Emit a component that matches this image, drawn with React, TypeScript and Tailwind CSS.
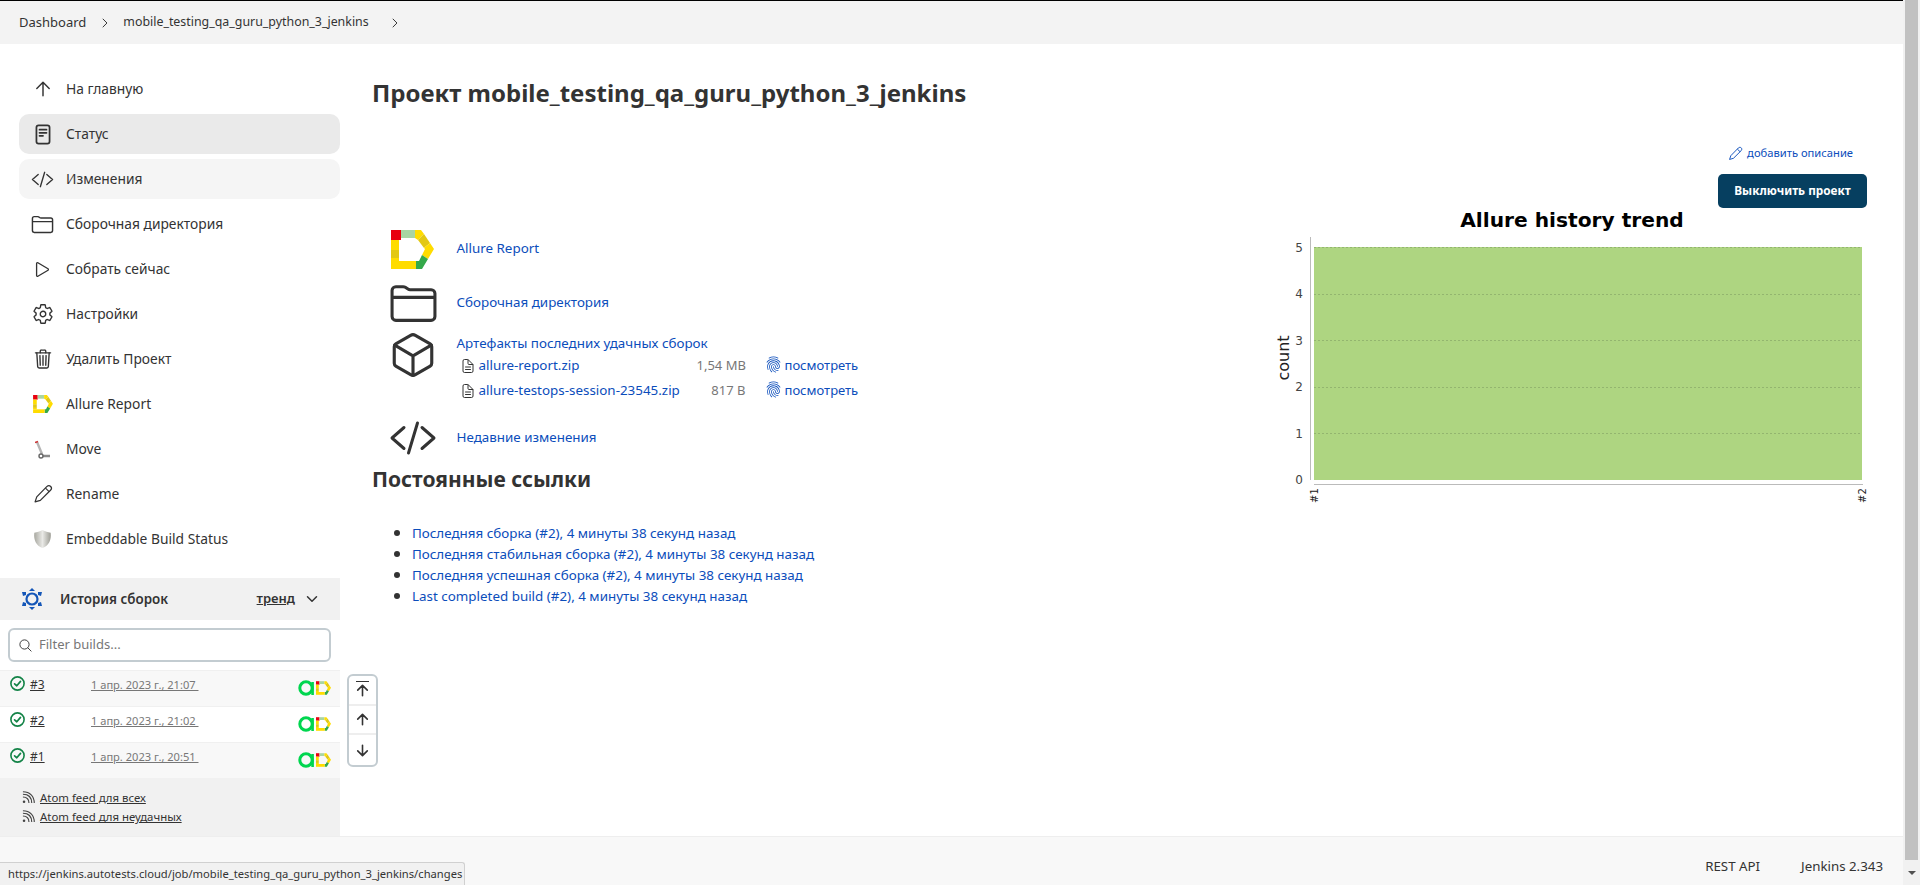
import {
  IoArrowDownOutline,
  IoArrowUpOutline,
  IoChevronDownOutline,
  IoChevronForwardOutline,
  IoCodeSlashOutline,
  IoCubeOutline,
  IoDocumentTextOutline,
  IoFingerPrintOutline,
  IoFolderOutline,
  IoPlayOutline,
  IoSearchOutline,
  IoSettingsOutline,
  IoTrashOutline,
} from "react-icons/io5";
import type { ReactNode } from "react";

function AllureIcon({ className }: { className?: string }) {
  return (
    <svg viewBox="0 0 43 39" className={className}>
      <path d="M0 0H10V10H0Z" fill="#e8000f" />
      <path d="M10 0H24V8H10Z" fill="#a9d5a2" />
      <path d="M24 0H30L33 4L27 10L24 8Z" fill="#ffdc00" />
      <path d="M33 4L39 13L33 18L27 10Z" fill="#e3c813" />
      <path d="M39 13L43 19L37 29L31 25L34 19L33 18Z" fill="#ffdc00" />
      <path d="M37 29L31 39H25V31H28L31 25Z" fill="#34a94a" />
      <path d="M0 39V31H25V39Z" fill="#ffdc00" />
      <path d="M0 10H8V20H0Z" fill="#ffdc00" />
      <path d="M0 20H8V28H0Z" fill="#e3c813" />
      <path d="M0 28H8V31H0Z" fill="#ffdc00" />
    </svg>
  );
}

function PencilIcon({ className }: { className?: string }) {
  return (
    <svg viewBox="0 0 24 24" className={className} fill="none" stroke="currentColor" strokeWidth="1.5" strokeLinejoin="round">
      <path d="M2.5 21.5L4.5 15.5L16.5 3.2C18 1.8 20 1.8 21.2 3C22.4 4.2 22.3 6.2 21 7.5L8.8 19.6Z" />
      <path d="M15 5L19.3 9.2" />
    </svg>
  );
}

function StatusIcon() {
  return (
    <svg viewBox="0 0 18 24" className="h-[21px] w-[16px]" fill="none" stroke="#333" strokeWidth="2" strokeLinecap="round">
      <rect x="1.5" y="1.5" width="15" height="21" rx="2.5" />
      <path d="M5 6.5H13M5 10H13M5 13.5H9" />
    </svg>
  );
}

function MoveIcon() {
  return (
    <svg viewBox="0 0 15 19" className="h-[19px] w-[15px]" fill="none">
      <path d="M2 2L7 14" stroke="#b5b5b5" strokeWidth="2.4" />
      <path d="M0 2.5L3 1.5" stroke="#c33" strokeWidth="1.5" />
      <path d="M5 16H15" stroke="#8a8a8a" strokeWidth="2.5" />
      <circle cx="6" cy="16" r="2" fill="#fff" stroke="#666" strokeWidth="1.4" />
    </svg>
  );
}

function ShieldIcon() {
  return (
    <svg viewBox="0 0 20 22" className="h-[20px] w-[19px]">
      <defs>
        <linearGradient id="shield" x1="0" x2="1" y1="0" y2="0">
          <stop offset="0" stopColor="#a8a8a0" />
          <stop offset="0.5" stopColor="#e9e9e6" />
          <stop offset="1" stopColor="#9c9c94" />
        </linearGradient>
      </defs>
      <path d="M10 1C13 3 16 3 19 4C20 12 17 18 10 21C3 18 0 12 1 4C4 3 7 3 10 1Z" fill="url(#shield)" />
    </svg>
  );
}

function HistoryIcon() {
  return (
    <svg viewBox="0 0 22 24" className="h-[24px] w-[22px]" fill="#1456b8">
      <circle cx="11" cy="12" r="5.5" fill="none" stroke="#1456b8" strokeWidth="2.2" />
      <path d="M11 1L14 4H8Z" />
      <path d="M11 23L14 20H8Z" />
      <path d="M1 5H5V8L2 9Z" />
      <path d="M21 5H17V8L20 9Z" />
      <path d="M1 19H5V16L2 15Z" />
      <path d="M21 19H17V16L20 15Z" />
    </svg>
  );
}

function BuildAIcon() {
  return (
    <svg viewBox="0 0 17 16" className="h-[16px] w-[17px]" fill="none">
      <circle cx="8" cy="8" r="6.2" stroke="#00d64f" strokeWidth="3" />
      <path d="M14.6 2V15" stroke="#00d64f" strokeWidth="2.6" />
    </svg>
  );
}

function CheckIcon() {
  return (
    <svg viewBox="0 0 15 15" className="ml-[10px] mt-[5px] h-[15px] w-[15px] shrink-0" fill="none" stroke="#138347" strokeLinecap="round" strokeLinejoin="round">
      <circle cx="7.5" cy="7.5" r="6.6" strokeWidth="1.6" />
      <path d="M4.6 7.8L6.8 9.8L10.5 5.4" strokeWidth="1.7" />
    </svg>
  );
}

function RssIcon() {
  return (
    <svg viewBox="0 0 14 14" className="h-[13px] w-[13px]" fill="none" stroke="#444" strokeWidth="1.2">
      <circle cx="2.2" cy="11.6" r="1.4" fill="#444" stroke="none" />
      <path d="M1 6.5C5 6.5 7.5 9 7.5 13" />
      <path d="M1 3.5C7 3.5 10.5 7 10.5 13" />
      <path d="M1 .8C8.5 .8 13.2 5.5 13.2 13" />
    </svg>
  );
}

const navItems: { label: string; icon: ReactNode; bg?: string }[] = [
  { label: "На главную", icon: <IoArrowUpOutline className="text-[22px] [&_path]:stroke-[34px]" /> },
  { label: "Статус", icon: <StatusIcon />, bg: "bg-[#eaeaea]" },
  { label: "Изменения", icon: <IoCodeSlashOutline className="text-[23px] [&_path]:stroke-[30px]" />, bg: "bg-[#f5f5f5]" },
  { label: "Сборочная директория", icon: <IoFolderOutline className="text-[23px]" /> },
  { label: "Собрать сейчас", icon: <IoPlayOutline className="text-[21px]" /> },
  { label: "Настройки", icon: <IoSettingsOutline className="text-[22px]" /> },
  { label: "Удалить Проект", icon: <IoTrashOutline className="text-[22px]" /> },
  { label: "Allure Report", icon: <AllureIcon className="h-[18px] w-[20px]" /> },
  { label: "Move", icon: <MoveIcon /> },
  { label: "Rename", icon: <PencilIcon className="h-[20px] w-[20px]" /> },
  { label: "Embeddable Build Status", icon: <ShieldIcon /> },
];

const builds = [
  { id: "#3", date: "1 апр. 2023 г., 21:07\u00a0", bg: "bg-[#f8f8f8]" },
  { id: "#2", date: "1 апр. 2023 г., 21:02\u00a0", bg: "bg-white" },
  { id: "#1", date: "1 апр. 2023 г., 20:51\u00a0", bg: "bg-[#f8f8f8]" },
];

const permalinks = [
  "Последняя сборка (#2), 4 минуты 38 секунд назад",
  "Последняя стабильная сборка (#2), 4 минуты 38 секунд назад",
  "Последняя успешная сборка (#2), 4 минуты 38 секунд назад",
  "Last completed build (#2), 4 минуты 38 секунд назад",
];

const artifacts = [
  { name: "allure-report.zip", size: "1,54 MB" },
  { name: "allure-testops-session-23545.zip", size: "817 B" },
];

function Sidebar() {
  return (
    <aside className="flex w-[340px] shrink-0 flex-col">
      <nav className="flex flex-col gap-[5px] pl-[19px] pt-[25px]">
        {navItems.map((item) => (
          <div
            key={item.label}
            className={`flex h-[40px] items-center rounded-[10px] ${item.bg ?? ""}`}
          >
            <span className="flex w-[47px] shrink-0 justify-center text-[#333]">{item.icon}</span>
            <span className="pt-[1px] text-[13.8px] text-[#333]">{item.label}</span>
          </div>
        ))}
      </nav>

      <div className="mt-[19px] flex h-[42px] items-center bg-[#f1f1f1] pl-[21px] pr-[20px]">
        <HistoryIcon />
        <span className="ml-[17px] flex-1 text-[13.4px] font-semibold text-[#333]">История сборок</span>
        <span className="text-[13px] font-semibold text-[#333] underline">тренд</span>
        <IoChevronDownOutline className="ml-[9px] text-[16px] text-[#333]" />
      </div>

      <div className="px-[8px] py-[8px]">
        <div className="flex h-[34px] w-[323px] items-center rounded-[6px] border-2 border-[#c3ccd1] bg-white pl-[8px]">
          <IoSearchOutline className="text-[15px] text-[#333]" />
          <span className="ml-[6px] text-[13px] text-[#777]">Filter builds...</span>
        </div>
      </div>

      {builds.map((b) => (
        <div key={b.id} className={`flex h-[36px] border-t border-[#f0f0f0] ${b.bg}`}>
          <CheckIcon />
          <span className="ml-[5px] mt-[5px] w-[61px] text-[12px] text-[#333] underline">{b.id}</span>
          <span className="mt-[5px] w-[207px] text-[11.1px] leading-[18px] text-[#777] underline">{b.date}</span>
          <span className="mt-[9px] flex items-start">
            <BuildAIcon />
            <AllureIcon className="ml-[1px] mt-[1px] h-[14px] w-[15px]" />
          </span>
        </div>
      ))}

      <div className="flex flex-1 flex-col gap-[2px] bg-[#f1f1f1] pl-[22px] pt-[11px]">
        <div className="flex items-center gap-[5px] text-[11.4px] text-[#333]">
          <RssIcon />
          <span className="underline">Atom feed для всех</span>
        </div>
        <div className="flex items-center gap-[5px] text-[11.4px] text-[#333]">
          <RssIcon />
          <span className="underline">Atom feed для неудачных</span>
        </div>
      </div>
    </aside>
  );
}

function TrendChart() {
  const grid = [247, 294, 340, 387, 433];
  const labels = [
    { y: 252, t: "5" },
    { y: 298, t: "4" },
    { y: 345, t: "3" },
    { y: 391, t: "2" },
    { y: 438, t: "1" },
    { y: 484, t: "0" },
  ];
  // viewBox uses page coordinates, the chart image starts at x=1270, y=204
  return (
    <svg width="600" height="310" viewBox="1270 204 600 310" className="block">
      <text x="1572" y="227" textAnchor="middle" fontFamily="DejaVu Sans" fontWeight="bold" fontSize="20.2" fill="#000">
        Allure history trend
      </text>
      <rect x="1314" y="247" width="548" height="233" fill="#aed581" />
      {grid.map((y) => (
        <line key={y} x1="1314" x2="1862" y1={y + 0.5} y2={y + 0.5} stroke="#93b56f" strokeDasharray="2 2" />
      ))}
      <line x1="1310.5" x2="1310.5" y1="237" y2="480" stroke="#bbb" />
      <line x1="1314" x2="1863" y1="484.5" y2="484.5" stroke="#bbb" />
      {labels.map((l) => (
        <text key={l.t} x="1303" y={l.y} textAnchor="end" fontFamily="DejaVu Sans" fontSize="12" fill="#444">
          {l.t}
        </text>
      ))}
      <text transform="translate(1289 358) rotate(-90)" textAnchor="middle" fontFamily="DejaVu Sans" fontSize="16" fill="#222">
        count
      </text>
      <text transform="translate(1318 503) rotate(-90)" fontFamily="DejaVu Sans" fontSize="10" fill="#222">
        #1
      </text>
      <text transform="translate(1866 503) rotate(-90)" fontFamily="DejaVu Sans" fontSize="10" fill="#222">
        #2
      </text>
    </svg>
  );
}

function MainContent() {
  const link = "text-[13.4px] text-[#0b4dbb]";
  return (
    <main className="flex flex-1 pl-[32px] pr-[36px]">
      <div className="flex-1">
        <h1 className="mt-[32px] text-[24px] font-bold leading-[33px] text-[#333]">
          Проект mobile_testing_qa_guru_python_3_jenkins
        </h1>

        <div className="ml-[19px] mt-[118px] flex h-[44px] items-center">
          <AllureIcon className="h-[39px] w-[43px]" />
          <span className={`ml-[22.5px] pb-[2px] ${link}`}>Allure Report</span>
        </div>
        <div className="ml-[19px] mt-[10px] flex h-[44px] items-center">
          <IoFolderOutline className="ml-[-2px] text-[49px] text-[#333]" />
          <span className={`ml-[18.5px] pb-[2px] ${link}`}>Сборочная директория</span>
        </div>

        <div className="ml-[19px] mt-[9px] flex">
          <IoCubeOutline className="ml-[-3px] mt-[-4px] shrink-0 self-start text-[50px] text-[#333]" />
          <div className="ml-[18.5px] flex flex-col">
            <span className={`${link} leading-[19px]`}>Артефакты последних удачных сборок</span>
            {artifacts.map((a) => (
              <div key={a.name} className="flex h-[25px] items-center">
                <IoDocumentTextOutline className="ml-[3px] text-[16px] text-[#333]" />
                <span className={`ml-[3px] w-[218px] ${link}`}>{a.name}</span>
                <span className="w-[49px] whitespace-nowrap text-right text-[13px] text-[#777]">{a.size}</span>
                <IoFingerPrintOutline className="ml-[19px] mt-[-3px] text-[17px] text-[#0b4dbb]" />
                <span className="ml-[3px] text-[13px] text-[#0b4dbb]">посмотреть</span>
              </div>
            ))}
          </div>
        </div>

        <div className="ml-[19px] mt-[13px] flex h-[44px] items-center">
          <IoCodeSlashOutline className="ml-[-2px] text-[48px] text-[#333]" />
          <span className={`ml-[19.5px] pb-[2px] ${link}`}>Недавние изменения</span>
        </div>

        <h2 className="mt-[6px] text-[21px] font-bold leading-[27px] text-[#333]">Постоянные ссылки</h2>

        <ul className="mt-[29px] list-disc pl-[40px] text-[#333]">
          {permalinks.map((p) => (
            <li key={p} className="h-[21px] leading-[21px]">
              <span className={link}>{p}</span>
            </li>
          ))}
        </ul>
      </div>

      <div className="flex w-[600px] shrink-0 flex-col items-end">
        <div className="mt-[100px] flex h-[18px] items-center pr-[14px] text-[11.2px] text-[#0b4dbb]">
          <PencilIcon className="mr-[4px] h-[15px] w-[15px]" />
          добавить описание
        </div>
        <div className="mt-[12px] flex h-[34px] w-[149px] items-center justify-center rounded-[5px] bg-[#063f60] text-[11.8px] font-bold text-white">
          Выключить проект
        </div>
        <div className="mr-[-3px] mt-[-4px]">
          <TrendChart />
        </div>
      </div>
    </main>
  );
}

export default function App() {
  return (
    <div
      className="relative flex h-screen overflow-hidden bg-white"
      style={{ fontFamily: '"Noto Sans", sans-serif' }}
    >
      <div className="flex min-w-0 flex-1 flex-col">
        <div className="flex h-[44px] shrink-0 items-center border-t border-black bg-[#f3f3f3] pl-[19px] text-[13px] text-[#333]">
          <span>Dashboard</span>
          <IoChevronForwardOutline className="ml-[12px] text-[14px] [&_path]:stroke-[36px]" />
          <span className="ml-[11px] text-[12.4px]">mobile_testing_qa_guru_python_3_jenkins</span>
          <IoChevronForwardOutline className="ml-[19px] text-[14px] [&_path]:stroke-[36px]" />
        </div>

        <div className="relative flex min-h-0 flex-1">
          <Sidebar />
          <MainContent />
          <div className="absolute left-[347px] top-[630px] flex h-[93px] w-[31px] flex-col rounded-[6px] border-2 border-[#c3ccd1] bg-white text-[#333]">
            <div className="flex h-[30px] flex-col items-center justify-center border-b-2 border-[#eee]">
              <span className="h-[1.5px] w-[13px] bg-[#333]" />
              <IoArrowUpOutline className="text-[17px]" />
            </div>
            <div className="flex h-[29px] items-center justify-center border-b-2 border-[#eee]">
              <IoArrowUpOutline className="text-[17px]" />
            </div>
            <div className="flex flex-1 items-center justify-center">
              <IoArrowDownOutline className="text-[17px]" />
            </div>
          </div>
        </div>

        <footer className="flex h-[49px] shrink-0 items-center justify-end gap-[41px] border-t border-[#eeeeee] bg-[#f8f8f8] pr-[20px] pt-[12px] text-[13.3px] text-[#333]">
          <span>REST API</span>
          <span>Jenkins 2.343</span>
        </footer>
      </div>

      <div className="flex w-[17px] shrink-0 flex-col bg-[#f1f1f1]">
        <div className="ml-[2px] h-[860px] w-[13px] bg-[#c1c1c1]" />
        <div className="flex flex-1 items-center justify-center">
          <span className="h-0 w-0 border-x-[4px] border-t-[4px] border-x-transparent border-t-[#505050]" />
        </div>
      </div>

      <div className="absolute bottom-0 left-0 flex h-[23px] w-[465px] items-center rounded-tr-[3px] border-r border-t border-[#d0d0d0] bg-[#f1f1f1] pl-[8px] text-[11.2px] whitespace-nowrap text-[#333]">
        https://jenkins.autotests.cloud/job/mobile_testing_qa_guru_python_3_jenkins/changes
      </div>
    </div>
  );
}
